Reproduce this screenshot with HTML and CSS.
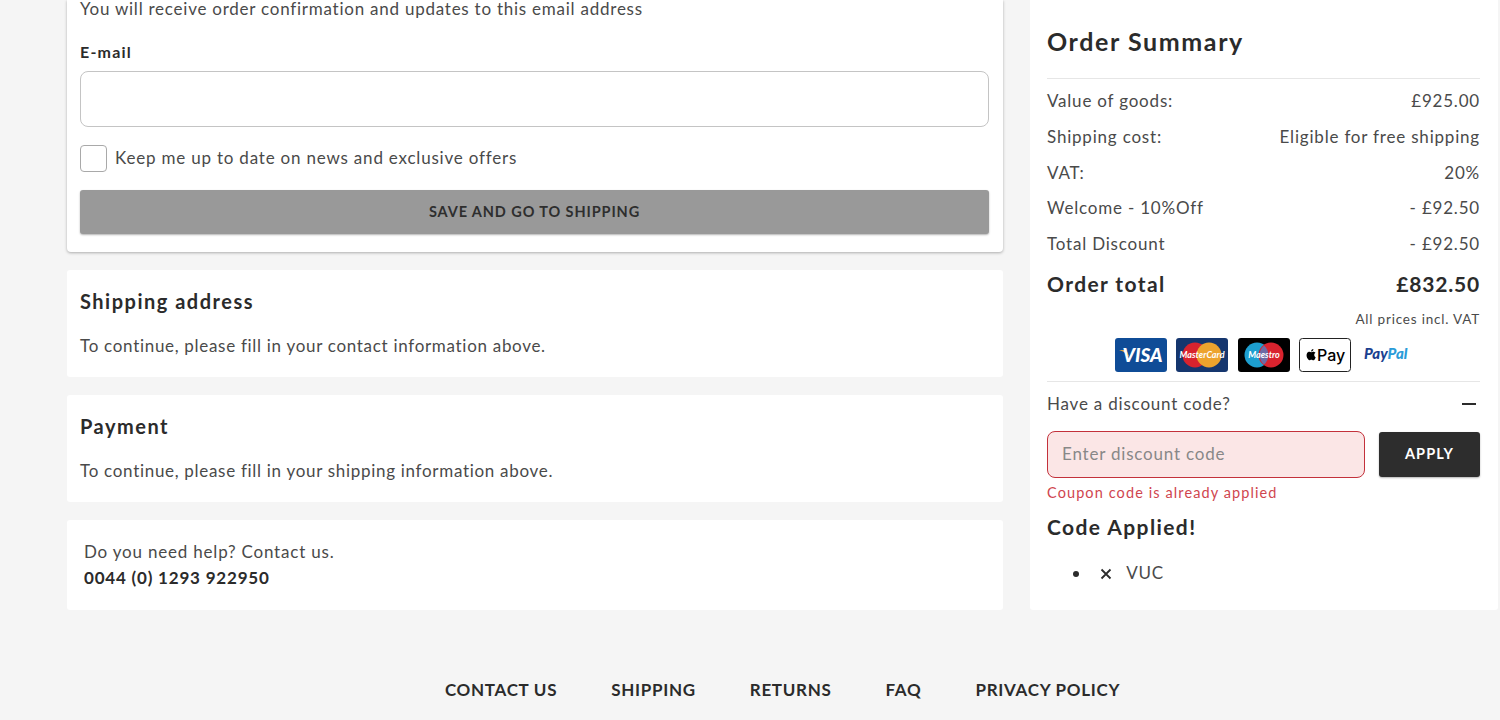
FILE: index.html
```html
<!DOCTYPE html>
<html lang="en">
<head>
<meta charset="UTF-8">
<meta name="viewport" content="width=device-width, initial-scale=1.0">
<title>Checkout</title>
<link rel="stylesheet" href="styles.css">
</head>
<body>

<div class="checkout">
    <div class="steps">
        <section class="card card-contact">
            <p class="note">You will receive order confirmation and updates to this email address</p>
            <label class="field-label" for="email">E-mail</label>
            <input class="text-input" type="text" id="email" name="email">
            <label class="check-row">
                <span class="check-box"></span>
                <span class="check-text">Keep me up to date on news and exclusive offers</span>
            </label>
            <button class="save-btn" type="button">SAVE AND GO TO SHIPPING</button>
        </section>

        <section class="card card-step">
            <h3>Shipping address</h3>
            <p>To continue, please fill in your contact information above.</p>
        </section>

        <section class="card card-step">
            <h3>Payment</h3>
            <p>To continue, please fill in your shipping information above.</p>
        </section>

        <section class="card card-help">
            <p>Do you need help? Contact us.</p>
            <p class="phone">0044 (0) 1293 922950</p>
        </section>
    </div>

    <aside class="summary">
        <h2>Order Summary</h2>
        <div class="rows">
            <div class="row"><span>Value of goods:</span><span>£925.00</span></div>
            <div class="row"><span>Shipping cost:</span><span>Eligible for free shipping</span></div>
            <div class="row"><span>VAT:</span><span>20%</span></div>
            <div class="row"><span>Welcome - 10%Off</span><span>- £92.50</span></div>
            <div class="row"><span>Total Discount</span><span>- £92.50</span></div>
        </div>
        <div class="total"><span class="total-label">Order total</span><span>£832.50</span></div>
        <div class="incl">All prices incl. VAT</div>

        <div class="pay-icons">
            <svg class="pay" viewBox="0 0 52 34">
                <rect width="52" height="34" rx="3" fill="#0f4c97"/>
                <path d="M4 12 L11 12 L15 20 Q11 14 4 12Z" fill="#e0a63a"/>
                <text class="visa-text" x="27.5" y="24">VISA</text>
            </svg>
            <svg class="pay" viewBox="0 0 52 34">
                <rect width="52" height="34" rx="3" fill="#15366e"/>
                <circle cx="19" cy="17" r="12.5" fill="#d8232e"/>
                <circle cx="33" cy="17" r="12.5" fill="#eda32d"/>
                <text class="logo-small" x="26" y="20">MasterCard</text>
            </svg>
            <svg class="pay" viewBox="0 0 52 34">
                <rect width="52" height="34" rx="3" fill="#000"/>
                <circle cx="19" cy="17" r="12.5" fill="#1d9fd0"/>
                <circle cx="33" cy="17" r="12.5" fill="#d9232e"/>
                <path d="M26 7.5a12.5 12.5 0 0 1 0 19a12.5 12.5 0 0 1 0-19z" fill="#6c6ba6"/>
                <text class="logo-small" x="26" y="20">Maestro</text>
            </svg>
            <svg class="pay" viewBox="0 0 52 34">
                <rect x="0.5" y="0.5" width="51" height="33" rx="3" fill="#fff" stroke="#222"/>
                <g transform="translate(6.5 11) scale(0.47)">
                    <path d="M12.152 6.896c-.948 0-2.415-1.078-3.96-1.04-2.04.027-3.91 1.183-4.961 3.014-2.117 3.675-.546 9.103 1.519 12.09 1.013 1.454 2.208 3.09 3.792 3.039 1.52-.065 2.09-.987 3.935-.987 1.831 0 2.35.987 3.96.948 1.637-.026 2.676-1.48 3.676-2.948 1.156-1.688 1.636-3.325 1.662-3.415-.039-.013-3.182-1.221-3.22-4.857-.026-3.04 2.48-4.494 2.597-4.559-1.429-2.09-3.623-2.324-4.39-2.376-2-.156-3.675 1.09-4.61 1.09zM15.53 3.83c.843-1.012 1.4-2.427 1.245-3.83-1.207.052-2.662.805-3.532 1.818-.78.896-1.454 2.338-1.273 3.714 1.338.104 2.715-.688 3.559-1.701" fill="#000"/>
                </g>
                <text class="apple-text" x="18" y="23">Pay</text>
            </svg>
            <svg class="pay" viewBox="0 0 52 34">
                <text class="paypal-text" x="3" y="21"><tspan fill="#1b3f8f">Pay</tspan><tspan fill="#2a9bd8">Pal</tspan></text>
            </svg>
        </div>

        <div class="discount-head">
            <span>Have a discount code?</span>
            <span class="minus"></span>
        </div>
        <div class="discount-form">
            <input class="discount-input" type="text" placeholder="Enter discount code">
            <button class="apply-btn" type="button">APPLY</button>
        </div>
        <div class="error">Coupon code is already applied</div>
        <h4>Code Applied!</h4>
        <ul class="codes">
            <li>
                <svg class="remove" viewBox="0 0 12 12"><path d="M1.5 1.5 L10.5 10.5 M10.5 1.5 L1.5 10.5" stroke="#2b2b2b" stroke-width="1.8" fill="none"/></svg>
                <span>VUC</span>
            </li>
        </ul>
    </aside>
</div>

<footer class="foot-links">
    <a href="#">CONTACT US</a>
    <a href="#">SHIPPING</a>
    <a href="#">RETURNS</a>
    <a href="#">FAQ</a>
    <a href="#">PRIVACY POLICY</a>
</footer>

</body>
</html>
```

FILE: styles.css
```css
html, body {
    height: 720px;
    overflow: hidden;
}
body {
    margin: 0;
    background-color: #f5f5f5;
    font-family: "Lato", Arial, sans-serif;
    font-size: 17px;
    letter-spacing: 0.8px;
    color: #4a4a4a;
}
p, h2, h3, h4, ul {
    margin: 0;
}
.checkout {
    display: flex;
    align-items: stretch;
    gap: 27px;
    padding: 0 2px 0 67px;
    height: 610px;
}
.steps {
    width: 936px;
    display: flex;
    flex-direction: column;
    gap: 18px;
}
.card {
    background-color: #fff;
    border-radius: 3px;
    box-sizing: border-box;
}
.card-contact {
    height: 252px;
    padding: 0 14px 0 13px;
    border-radius: 0 0 4px 4px;
    box-shadow: 0 1px 3px rgba(0, 0, 0, 0.3);
}
.note {
    line-height: 17px;
    margin-bottom: 25px;
    letter-spacing: 0.76px;
}
.field-label {
    display: block;
    font-weight: 700;
    color: #2b2b2b;
    font-size: 16px;
    line-height: 20px;
    margin-bottom: 9px;
    letter-spacing: 1.2px;
}
.text-input {
    display: block;
    width: 100%;
    height: 56px;
    box-sizing: border-box;
    border: 1px solid #c4c4c4;
    border-radius: 8px;
    background: #fff;
}
.check-row {
    display: flex;
    align-items: center;
    gap: 8px;
    margin-top: 18px;
}
.check-box {
    width: 27px;
    height: 27px;
    box-sizing: border-box;
    border: 1px solid #a9a9a9;
    border-radius: 4px;
}
.check-text {
    padding-bottom: 2px;
}
.save-btn {
    display: block;
    width: 100%;
    height: 44px;
    padding: 0 0 1px;
    margin-top: 18px;
    background-color: #999;
    color: #2e2e2e;
    border: none;
    border-radius: 3px;
    font: 700 14.5px "Lato", Arial, sans-serif;
    letter-spacing: 0.9px;
    box-shadow: 0 1px 2px rgba(0, 0, 0, 0.3);
}
.card-step {
    height: 107px;
    padding: 18px 13px 0;
}
.card-step h3 {
    font-size: 20px;
    line-height: 26px;
    color: #2b2b2b;
    margin-bottom: 21px;
    letter-spacing: 1.5px;
}
.card-step p {
    line-height: 22px;
    letter-spacing: 0.7px;
}
.card-help {
    height: 90px;
    padding: 19px 17px 0;
    line-height: 26px;
}
.phone {
    font-weight: 700;
    color: #2b2b2b;
}
.summary {
    width: 468px;
    box-sizing: border-box;
    background-color: #fff;
    border-radius: 0 0 3px 3px;
    padding: 23px 18px 0 17px;
}
.summary h2 {
    font-size: 25px;
    line-height: 36px;
    color: #2b2b2b;
    padding-bottom: 19px;
    border-bottom: 1px solid #e6e6e6;
    letter-spacing: 1.6px;
}
.rows {
    padding-top: 4px;
}
.row {
    display: flex;
    justify-content: space-between;
    line-height: 35.75px;
}
.total {
    display: flex;
    justify-content: space-between;
    font-size: 21px;
    font-weight: 700;
    color: #2b2b2b;
    line-height: 30px;
    margin-top: 7px;
}
.total-label {
    letter-spacing: 1.4px;
}
.incl {
    font-size: 13.5px;
    text-align: right;
    line-height: 18px;
    margin-top: 11px;
}
.pay-icons {
    display: flex;
    justify-content: center;
    gap: 9.5px;
    margin-top: 10px;
    padding-bottom: 9px;
    border-bottom: 1px solid #e6e6e6;
}
.pay {
    width: 52px;
    height: 34px;
    display: block;
}
.visa-text {
    font: italic 900 19px "Lato", Arial, sans-serif;
    fill: #fff;
    text-anchor: middle;
    letter-spacing: 0;
}
.logo-small {
    font: italic 700 9px "Lato", Arial, sans-serif;
    fill: #fff;
    text-anchor: middle;
    letter-spacing: 0;
}
.apple-text {
    font: 500 16px "Inter", Arial, sans-serif;
    fill: #000;
    letter-spacing: 0;
}
.paypal-text {
    font: italic 900 15px "Lato", Arial, sans-serif;
    letter-spacing: 0;
}
.discount-head {
    display: flex;
    justify-content: space-between;
    align-items: center;
    height: 44px;
}
.minus {
    width: 14px;
    height: 2px;
    margin-right: 4px;
    background-color: #2b2b2b;
}
.discount-form {
    display: flex;
    align-items: center;
    gap: 14px;
    margin-top: 5px;
}
.discount-input {
    width: 318px;
    height: 47px;
    box-sizing: border-box;
    padding: 0 14px 2px;
    background-color: #fbe6e6;
    border: 1px solid #c3313b;
    border-radius: 8px;
    font: 17px "Lato", Arial, sans-serif;
    letter-spacing: 0.8px;
}
.discount-input::placeholder {
    color: #888;
}
.apply-btn {
    width: 101px;
    height: 45px;
    padding: 0 0 2px;
    background-color: #2d2d2d;
    color: #fff;
    border: none;
    border-radius: 3px;
    font: 700 14.5px "Lato", Arial, sans-serif;
    letter-spacing: 1.1px;
    box-shadow: 0 1px 2px rgba(0, 0, 0, 0.3);
}
.error {
    font-size: 14.5px;
    color: #d0454e;
    line-height: 20px;
    margin-top: 5px;
    letter-spacing: 1.1px;
}
.summary h4 {
    font-size: 21px;
    line-height: 28px;
    color: #2b2b2b;
    margin-top: 10px;
    letter-spacing: 1.4px;
}
.codes {
    padding-left: 44px;
    margin-top: 20px;
}
.codes li {
    line-height: 24px;
    color: #2b2b2b;
}
.codes li span {
    color: #4a4a4a;
    margin-left: 9px;
}
.remove {
    width: 12px;
    height: 12px;
    margin-left: 9px;
    vertical-align: -1px;
}
.foot-links {
    display: flex;
    justify-content: center;
    gap: 54px;
    padding: 70px 2px 0 67px;
    letter-spacing: 0.7px;
}
.foot-links a {
    font-size: 17px;
    font-weight: 700;
    color: #2b2b2b;
    text-decoration: none;
    line-height: 20px;
}
```
